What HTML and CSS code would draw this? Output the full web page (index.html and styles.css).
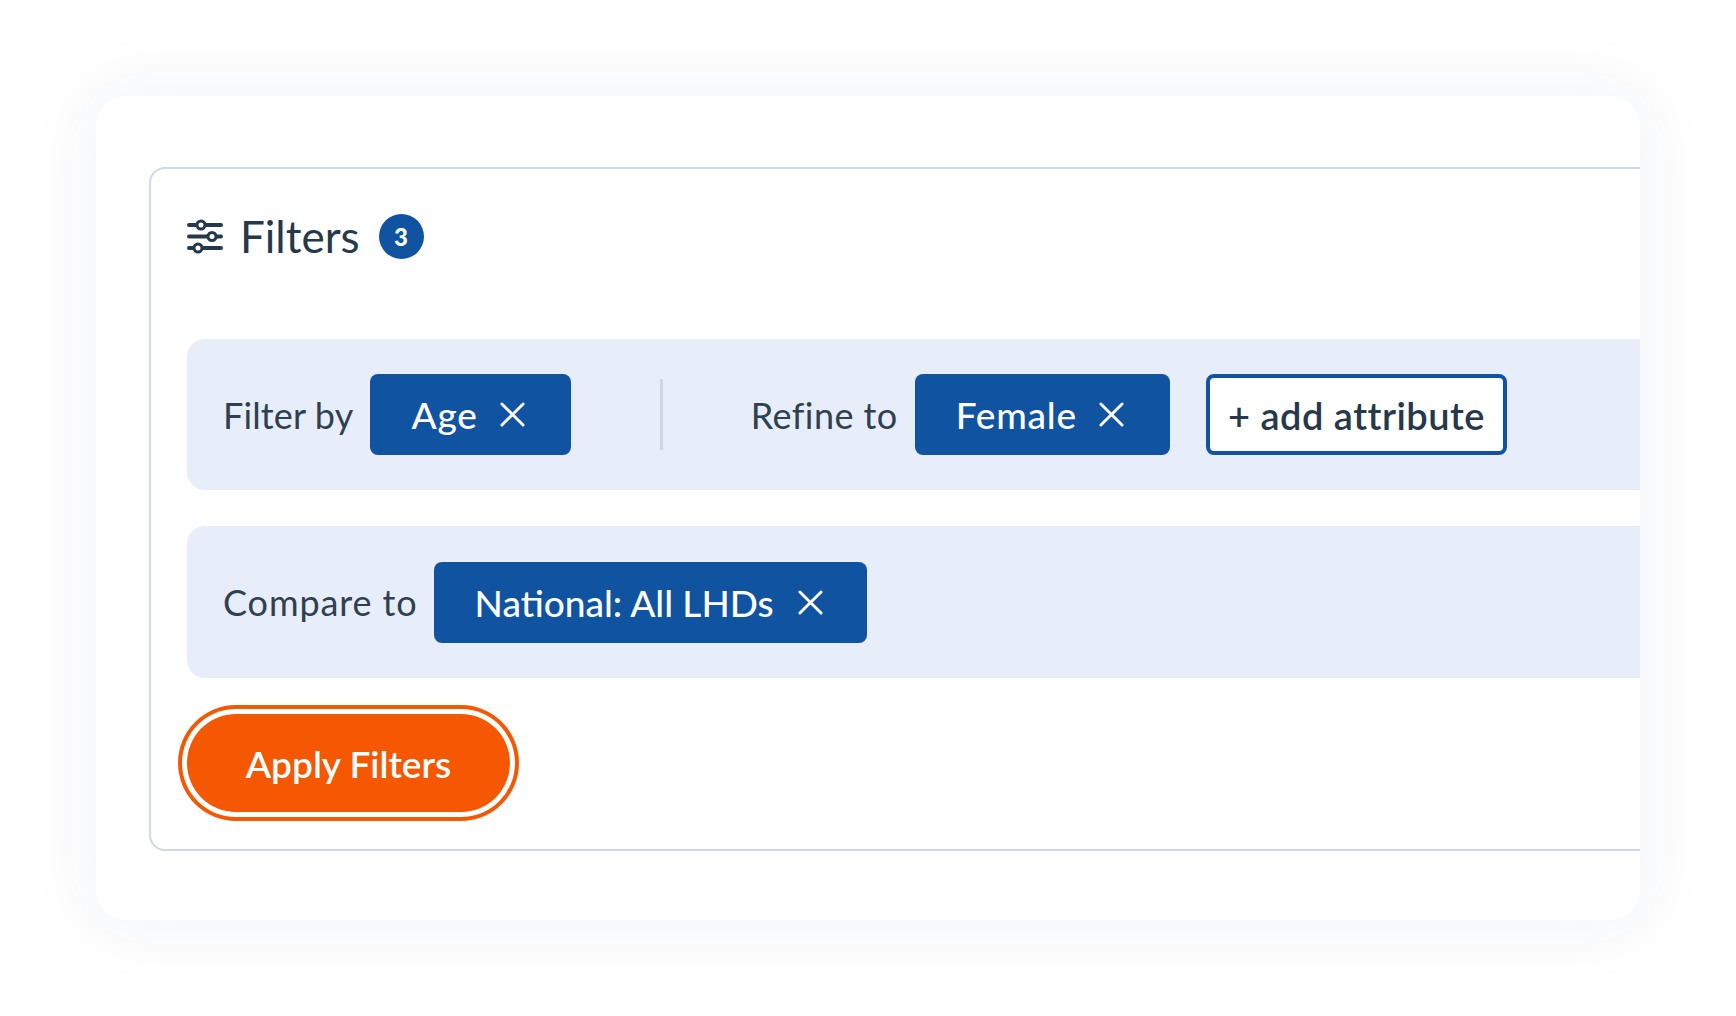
FILE: index.html
```html
<!DOCTYPE html>
<html lang="en">
<head>
    <meta charset="UTF-8" />
    <title>Filters</title>
    <link rel="stylesheet" href="styles.css">
</head>
<body>
    <div class="card">
        <div class="filters">
            <div class="filters-head">
                <svg class="filters-icon" width="36" height="36" viewBox="0 0 36 36">
                    <path d="M2 7H34M2 18.500H34M2 30H34" stroke="#26384b" stroke-width="4" stroke-linecap="round" fill="none" />
                    <circle cx="14" cy="7" r="4" fill="#fff" stroke="#26384b" stroke-width="3" />
                    <circle cx="25" cy="18.500" r="4" fill="#fff" stroke="#26384b" stroke-width="3" />
                    <circle cx="11" cy="30" r="4" fill="#fff" stroke="#26384b" stroke-width="3" />
                </svg>
                <h2>Filters</h2>
                <span class="count">3</span>
            </div>

            <div class="filter-row">
                <span class="label">Filter by</span>
                <button class="chip chip-short">Age <svg width="25" height="25" viewBox="0 0 26 26"><path d="M2 2L24 24M24 2L2 24" stroke="#fff" stroke-width="3" stroke-linecap="round" /></svg></button>
                <span class="divider"></span>
                <span class="label label-refine">Refine to</span>
                <button class="chip chip-short">Female <svg width="25" height="25" viewBox="0 0 26 26"><path d="M2 2L24 24M24 2L2 24" stroke="#fff" stroke-width="3" stroke-linecap="round" /></svg></button>
                <button class="add-btn">+ add attribute</button>
            </div>

            <div class="filter-row filter-row-compare">
                <span class="label label-compare">Compare to</span>
                <button class="chip">National: All LHDs <svg width="25" height="25" viewBox="0 0 26 26"><path d="M2 2L24 24M24 2L2 24" stroke="#fff" stroke-width="3" stroke-linecap="round" /></svg></button>
            </div>

            <button class="apply-btn">Apply Filters</button>
        </div>
    </div>
</body>
</html>
```

FILE: styles.css
```css
body {
    margin: 0;
    padding: 96px;
    height: 1016px;
    box-sizing: border-box;
    background-color: #ffffff;
    font-family: "Lato", sans-serif;
    overflow: hidden;
}
.card {
    width: 1544px;
    height: 824px;
    box-sizing: border-box;
    padding: 71px 0 0 53px;
    background-color: #ffffff;
    border-radius: 30px;
    box-shadow: 0 0 70px 10px rgba(20, 60, 120, 0.05);
    overflow: hidden;
}
.filters {
    width: 1600px;
    height: 684px;
    box-sizing: border-box;
    padding: 0 0 0 36px;
    border: 2px solid #cfd8e3;
    border-radius: 16px;
}
.filters-head {
    display: flex;
    align-items: center;
    height: 170px;
    padding-bottom: 36px;
    box-sizing: border-box;
}
.filters-icon {
    margin-right: 17px;
}
h2 {
    margin: 0;
    font-size: 44px;
    font-weight: 400;
    color: #26384b;
}
.count {
    display: flex;
    align-items: center;
    justify-content: center;
    width: 45px;
    height: 45px;
    margin-left: 19px;
    border-radius: 50%;
    background-color: #1053a1;
    color: white;
    font-size: 24px;
    font-weight: 900;
}
.filter-row {
    display: flex;
    align-items: center;
    height: 151px;
    box-sizing: border-box;
    padding-left: 36px;
    margin-bottom: 36px;
    background-color: #e7eef9;
    border-radius: 18px;
}
.filter-row-compare {
    height: 152px;
}
.label {
    margin-right: 17px;
    font-size: 36px;
    letter-spacing: 0.15px;
    color: #2f4050;
}
.label-refine {
    letter-spacing: 0.45px;
}
.label-compare {
    margin-right: 16px;
    letter-spacing: 0.9px;
}
.chip {
    display: flex;
    align-items: center;
    gap: 24px;
    height: 81px;
    padding: 0 44px 0 41px;
    border: none;
    border-radius: 8px;
    background-color: #1053a1;
    color: white;
    font-family: inherit;
    font-size: 37px;
    font-weight: 500;
}
.chip-short {
    gap: 22px;
    padding-right: 46px;
    letter-spacing: 0.8px;
}
.divider {
    width: 3px;
    height: 71px;
    margin: 0 88px 0 89px;
    background-color: #d0d7e0;
}
.add-btn {
    height: 81px;
    margin-left: 36px;
    padding: 0 18px;
    border: 4px solid #1053a1;
    border-radius: 8px;
    background-color: white;
    color: #26384b;
    font-family: inherit;
    font-size: 38px;
    font-weight: 600;
    letter-spacing: 0.5px;
    white-space: nowrap;
}
.apply-btn {
    display: block;
    width: 323px;
    height: 98px;
    margin: 0;
    border: none;
    border-radius: 49px;
    background-color: #f55703;
    box-shadow: 0 0 0 5px white, 0 0 0 9px #f55703;
    color: white;
    font-family: inherit;
    font-size: 37px;
    font-weight: 600;
}
```
